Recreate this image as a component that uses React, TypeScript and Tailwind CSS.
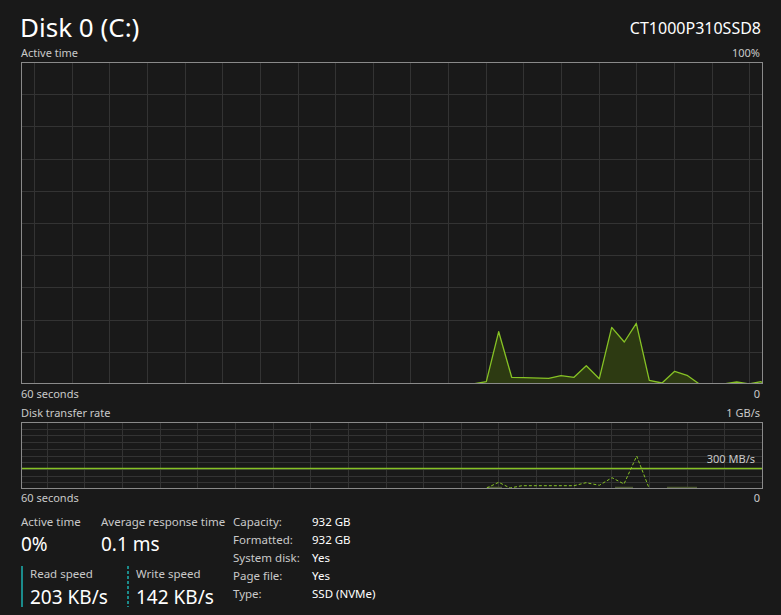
import React from "react";

const FONT = { fontFamily: '"Noto Sans", "Open Sans", sans-serif' };

// active time samples, screen coords
const activePts: [number, number][] = [
  [21, 384], [473.3, 384], [486.3, 381.7], [498.7, 331.7], [511.7, 377.3], [523.7, 377.7],
  [548.7, 378.3], [561, 375.7], [574, 377.3], [586.3, 365.7], [599.3, 378.7], [611.7, 327.3],
  [624.3, 342], [636.3, 323.3], [649.3, 380.3], [662, 383], [674.7, 371.3], [687, 375.3],
  [699.3, 384], [712, 384], [724, 384], [736.7, 382], [749, 384], [761, 381.7], [763, 383],
];

const writePts: [number, number][] = [
  [486.7, 488], [498.7, 482.3], [510, 488], [522, 485.7], [574, 485.7], [586, 482.7],
  [599.3, 485.3], [612, 477.7], [624, 484], [636.7, 456], [649, 488],
];

const readSegs: [number, number][] = [
  [487, 502],
  [615, 633],
  [667, 697],
];

function Grid({ w, h, x0, rows }: { w: number; h: number; x0: number; rows: number }) {
  const step = 37.65;
  const xs: number[] = [];
  for (let x = x0; x < w - 1; x += step) xs.push(Math.round(x) + 0.5);
  const ys: number[] = [];
  for (let i = 1; i < rows; i++) ys.push(Math.round((h * i) / rows) + 0.5);
  return (
    <g stroke="#333333" strokeWidth={1} shapeRendering="crispEdges">
      {xs.map((x) => (
        <line key={"x" + x} x1={x} y1={0} x2={x} y2={h} />
      ))}
      {ys.map((y) => (
        <line key={"y" + y} x1={0} y1={y} x2={w} y2={y} />
      ))}
    </g>
  );
}

function ActiveChart() {
  const w = 742;
  const h = 322;
  const pts = activePts.map(([x, y]) => `${x - 21},${y - 62}`).join(" ");
  return (
    <svg width={w} height={h} className="block">
      <Grid w={w} h={h} x0={13} rows={10} />
      <polygon points={`0,${h} ${pts} ${w},${h}`} fill="#2d3a12" />
      <polyline points={pts} fill="none" stroke="#86c225" strokeWidth={1.3} strokeLinejoin="round" />
      <rect x={0.5} y={0.5} width={w - 1} height={h - 1} fill="none" stroke="#8a8a8a" />
    </svg>
  );
}

function TransferChart() {
  const w = 742;
  const h = 67;
  const pts = writePts.map(([x, y]) => `${x - 21},${y - 422}`).join(" ");
  return (
    <svg width={w} height={h} className="block">
      <Grid w={w} h={h} x0={25.7} rows={10} />
      <line x1={0} y1={46.5} x2={w} y2={46.5} stroke="#86c225" strokeWidth={1.5} />
      {readSegs.map(([a, b]) => (
        <line key={a} x1={a - 21} y1={65.5} x2={b - 21} y2={65.5} stroke="#4d5a33" strokeWidth={1.5} />
      ))}
      <polyline points={pts} fill="none" stroke="#86c225" strokeWidth={1} strokeDasharray="3 2" />
      <rect x={0.5} y={0.5} width={w - 1} height={h - 1} fill="none" stroke="#8a8a8a" />
    </svg>
  );
}

const specs = [
  ["Capacity:", "932 GB"],
  ["Formatted:", "932 GB"],
  ["System disk:", "Yes"],
  ["Page file:", "Yes"],
  ["Type:", "SSD (NVMe)"],
];

export default function App() {
  return (
    <div className="w-[781px] h-[615px] bg-[#191919] text-white px-[21px] overflow-hidden" style={FONT}>
      <div className="flex justify-between items-end h-[44px]">
        <div className="text-[26px] leading-[34px] -ml-[1px]">Disk 0 (C:)</div>
        <div className="text-[16px] leading-[22px] mb-[5px] -mr-[1px]">CT1000P310SSD8</div>
      </div>

      <div className="flex justify-between items-center h-[18px] text-[11px] text-[#c9c9c9]">
        <span>Active time</span>
        <span>100%</span>
      </div>
      <ActiveChart />
      <div className="flex justify-between items-center h-[20px] text-[11px] text-[#c9c9c9]">
        <span>60 seconds</span>
        <span>0</span>
      </div>
      <div className="flex justify-between items-center h-[18px] text-[11px] text-[#c9c9c9]">
        <span>Disk transfer rate</span>
        <span>1 GB/s</span>
      </div>
      <div className="relative">
        <TransferChart />
        <span className="absolute right-[5px] top-[30px] text-[11px] leading-[14px] text-[#c9c9c9]">300 MB/s</span>
      </div>
      <div className="flex justify-between items-center h-[19px] text-[11px] text-[#c9c9c9]">
        <span>60 seconds</span>
        <span>0</span>
      </div>

      <div className="flex mt-[5px]">
        <div className="w-[212px]">
          <div className="flex">
            <div className="w-[80px]">
              <div className="text-[11.5px] leading-[18px] text-[#c9c9c9]">Active time</div>
              <div className="text-[19px] leading-[26px]">0%</div>
            </div>
            <div>
              <div className="text-[11.5px] leading-[18px] text-[#c9c9c9]">Average response time</div>
              <div className="text-[19px] leading-[26px]">0.1 ms</div>
            </div>
          </div>
          <div className="flex mt-[9px]">
            <div className="w-[106px] flex gap-[7px]">
              <div className="w-[2px] h-[41px] bg-[#1b8b8b]" />
              <div>
                <div className="text-[11.5px] leading-[16px] text-[#c9c9c9]">Read speed</div>
                <div className="text-[19px] leading-[30px]">203 KB/s</div>
              </div>
            </div>
            <div className="flex gap-[7px]">
              <div className="w-[2px] h-[41px] bg-[repeating-linear-gradient(to_bottom,#1b8b8b_0_3px,transparent_3px_5px)]" />
              <div>
                <div className="text-[11.5px] leading-[16px] text-[#c9c9c9]">Write speed</div>
                <div className="text-[19px] leading-[30px]">142 KB/s</div>
              </div>
            </div>
          </div>
        </div>
        <div className="text-[11.5px] leading-[18px]">
          {specs.map(([k, v]) => (
            <div key={k} className="flex">
              <span className="w-[79px] text-[#c9c9c9]">{k}</span>
              <span>{v}</span>
            </div>
          ))}
        </div>
      </div>
    </div>
  );
}
